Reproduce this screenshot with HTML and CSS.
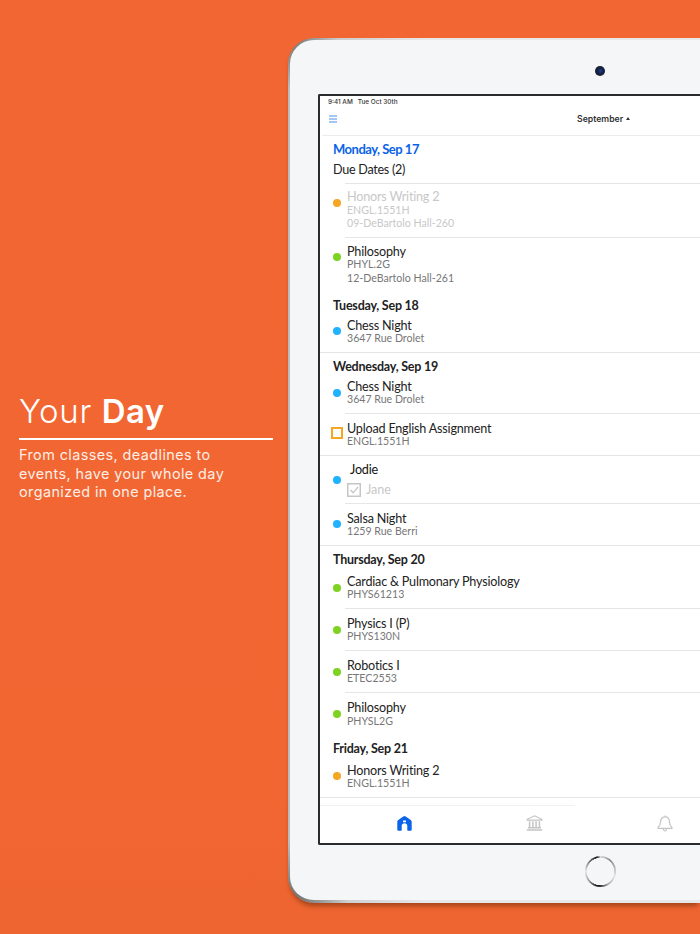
FILE: index.html
```html
<!DOCTYPE html>
<html lang="en">
<head>
<meta charset="utf-8">
<title>Your Day</title>
<link rel="stylesheet" href="styles.css">
</head>
<body>
<main class="stage">
  <section class="pitch">
    <h1 class="pitch-title">Your <b>Day</b></h1>
    <p class="pitch-text">From classes, deadlines to events, have your whole day organized in one place.</p>
  </section>
  <div class="device">
    <div class="camera"></div>
    <div class="screen">
      <div class="status">9:41 AM&nbsp;&nbsp; Tue Oct 30th</div>
      <header class="nav">
        <svg class="menu" width="10" height="8" viewBox="0 0 10 8"><path d="M1 1h8M1 4h8M1 7h8" stroke="#4a90e8" stroke-width="1.2" fill="none"/></svg>
        <span class="month">September<i class="caret"></i></span>
      </header>
      <div class="today">
        <div class="today-date">Monday, Sep 17</div>
        <div class="today-due">Due Dates (2)</div>
      </div>

      <div class="row row-tall muted">
        <span class="dot orange"></span>
        <div class="body divided"><div class="name">Honors Writing 2</div><div class="sub">ENGL.1551H</div><div class="sub">09-DeBartolo Hall-260</div></div>
      </div>
      <div class="row row-tall">
        <span class="dot green"></span>
        <div class="body"><div class="name">Philosophy</div><div class="sub">PHYL.2G</div><div class="sub">12-DeBartolo Hall-261</div></div>
      </div>

      <h2 class="day">Tuesday, Sep 18</h2>
      <div class="row full">
        <span class="dot blue"></span>
        <div class="body"><div class="name">Chess Night</div><div class="sub">3647 Rue Drolet</div></div>
      </div>

      <h2 class="day">Wednesday, Sep 19</h2>
      <div class="row">
        <span class="dot blue"></span>
        <div class="body divided"><div class="name">Chess Night</div><div class="sub">3647 Rue Drolet</div></div>
      </div>
      <div class="row full">
        <span class="square"></span>
        <div class="body"><div class="name">Upload English Assignment</div><div class="sub">ENGL.1551H</div></div>
      </div>
      <div class="row row-check">
        <span class="dot blue"></span>
        <div class="body divided">
          <div class="name name-in">Jodie</div>
          <div class="attendee">
            <svg width="14" height="14" viewBox="0 0 14 14"><rect x=".75" y=".75" width="12.5" height="12.5" fill="none" stroke="#c6c6c6" stroke-width="1.5"/><path d="M3.5 7l2.6 2.8L11 4" fill="none" stroke="#c6c6c6" stroke-width="1.3"/></svg>
            <span>Jane</span>
          </div>
        </div>
      </div>
      <div class="row full">
        <span class="dot blue"></span>
        <div class="body"><div class="name">Salsa Night</div><div class="sub">1259 Rue Berri</div></div>
      </div>

      <h2 class="day day-tall">Thursday, Sep 20</h2>
      <div class="row">
        <span class="dot green"></span>
        <div class="body divided"><div class="name">Cardiac &amp; Pulmonary Physiology</div><div class="sub">PHYS61213</div></div>
      </div>
      <div class="row">
        <span class="dot green"></span>
        <div class="body divided"><div class="name">Physics I (P)</div><div class="sub">PHYS130N</div></div>
      </div>
      <div class="row">
        <span class="dot green"></span>
        <div class="body divided"><div class="name">Robotics I</div><div class="sub">ETEC2553</div></div>
      </div>
      <div class="row">
        <span class="dot green"></span>
        <div class="body"><div class="name">Philosophy</div><div class="sub">PHYSL2G</div></div>
      </div>

      <h2 class="day day-tall">Friday, Sep 21</h2>
      <div class="row full">
        <span class="dot orange"></span>
        <div class="body"><div class="name">Honors Writing 2</div><div class="sub">ENGL.1551H</div></div>
      </div>

      <div class="tab-rule"></div>
      <nav class="tabs">
        <span class="tab">
          <svg width="15" height="15" viewBox="0 0 15 15"><path fill="#0a63e8" fill-rule="evenodd" d="M6.300.5c.7-.4 1.700-.4 2.400 0l4.700 3.200c.8.500 1.300 1.300 1.300 2.300v7.200c0 1-.6 1.600-1.500 1.600h-2c-.5 0-.9-.4-.9-.9V10c0-1.600-1.100-2.700-2.800-2.700S4.700 8.400 4.700 10v3.900c0 .5-.4.900-.9.9h-2C.9 14.800.300 14.200.300 13.200V6c0-1 .5-1.800 1.300-2.300L6.300.5Z M6 4.600h3v1.600H6z"/></svg>
        </span>
        <span class="tab">
          <svg width="17" height="16" viewBox="0 0 17 16" fill="none" stroke="#c4c4c4" stroke-width="1.200"><path d="M8.500 .8 15.800 4.300v.9H1.200v-.9L8.500.8Z"/><path d="M3.600 6.200v6M6.900 6.200v6M10.100 6.200v6M13.400 6.200v6" stroke-width="1.500"/><path d="M2 12.800h13M.8 15h15.400" stroke-width="1.400"/></svg>
        </span>
        <span class="tab">
          <svg width="16" height="17" viewBox="0 0 16 17" fill="none" stroke="#c4c4c4" stroke-width="1.200"><path d="M8 1.800c-2.900 0-4.400 2.200-4.400 5 0 2.900-1 4.200-2.500 5.500v1h13.800v-1c-1.500-1.300-2.500-2.600-2.500-5.500 0-2.800-1.500-5-4.400-5Z"/><path d="M8 .6v1.200M6.300 13.500c.2 1.600.8 2.500 1.700 2.500s1.500-.9 1.700-2.500"/></svg>
        </span>
      </nav>
    </div>
    <div class="home-button"></div>
  </div>
</main>
</body>
</html>
```

FILE: styles.css
```css
* { box-sizing: border-box; }

html, body {
  margin: 0;
  height: 100%;
  overflow: hidden;
}

body {
  background: linear-gradient(#f26633, #f26632 85%, #ee6531);
}

.stage {
  display: flex;
  width: 700px;
  height: 934px;
  overflow: hidden;
}

.pitch {
  flex: 0 0 288px;
  padding: 392px 15px 0 19px;
  font-family: Inter, "Liberation Sans", sans-serif;
  color: #fff;
}

.pitch-title {
  margin: 0;
  padding-bottom: 7px;
  border-bottom: 2px solid #fff;
  font-size: 33px;
  line-height: 39px;
  font-weight: 300;
  letter-spacing: .65px;
}

.pitch-title b { font-weight: 600; letter-spacing: .3px; }

.pitch-text {
  max-width: 215px;
  margin: 6px 0 0;
  font-size: 14.400px;
  line-height: 18.500px;
  letter-spacing: .42px;
  font-weight: 400;
  color: #fdeee6;
}

.device {
  flex: 0 0 412px;
  display: flex;
  flex-direction: column;
  height: 865px;
  margin-top: 38px;
  border: 2px solid transparent;
  border-right: 0;
  border-bottom-width: 3px;
  border-radius: 26px 0 0 26px;
  background:
    linear-gradient(#f4f6f8, #f4f6f8) padding-box,
    radial-gradient(circle 50px at 0 0, #6f6f6f, rgba(120,120,120,0)) border-box,
    radial-gradient(circle 60px at 0 100%, #666, rgba(120,120,120,0)) border-box,
    linear-gradient(90deg, #bcbcbc, #e6e8ea 33%) border-box;
  box-shadow: 0 5px 5px -2px rgba(110,45,10,.6);
}

.camera {
  flex: none;
  width: 10px;
  height: 10px;
  margin: 26px 0 0 305px;
  border-radius: 50%;
  background: radial-gradient(circle at 55% 50%, #1f3f9a 0, #14244f 35%, #1a1d24 70%);
}

.screen {
  flex: none;
  display: flex;
  flex-direction: column;
  width: 382px;
  height: 751px;
  margin: 18px 0 0 28px;
  border: 2px solid #2b2b2d;
  border-right: 0;
  border-radius: 2px 0 0 2px;
  background: #fff;
  font-family: Lato, "Liberation Sans", sans-serif;
  color: #222;
}

.status {
  height: 12px;
  padding: 2px 0 0 8px;
  font: 500 6.400px/8px Inter, "Liberation Sans", sans-serif;
  color: #333;
}

.nav {
  display: flex;
  align-items: center;
  position: relative;
  flex: none;
  height: 28px;
  border-bottom: 1px solid #ececec;
  margin-left: 2px;
  padding: 0 0 5px 255px;
}

.menu { position: absolute; left: 6px; top: 7px; }

.month {
  font: 600 8.700px/11px Inter, "Liberation Sans", sans-serif;
  color: #333;
}

.caret {
  display: inline-block;
  width: 0;
  height: 0;
  margin-left: 3px;
  vertical-align: 2px;
  border-left: 2.500px solid transparent;
  border-right: 2.500px solid transparent;
  border-bottom: 3px solid #333;
}

.today {
  flex: none;
  height: 48px;
  padding: 6px 0 0 13px;
  position: relative;
}

.today-date {
  font-size: 13px;
  line-height: 15px;
  font-weight: 700;
  letter-spacing: -.5px;
  color: #0a63e8;
}

.today-due {
  margin-top: 5px;
  font-size: 12.600px;
  line-height: 16px;
  letter-spacing: -.28px;
  color: #222;
}

.today::after {
  content: "";
  position: absolute;
  left: 25px;
  right: 0;
  bottom: 0;
  border-top: 1px solid #e6e6e6;
}

.day {
  flex: none;
  height: 19px;
  margin: 0;
  padding: 7px 0 0 13px;
  font-size: 12.500px;
  line-height: 14px;
  font-weight: 700;
  letter-spacing: -.23px;
  color: #222;
}

.day-tall { height: 21px; }

.row {
  flex: none;
  display: flex;
  height: 42px;
}

.row-tall { height: 54px; }
.row-check { height: 48px; }
.full { border-bottom: 1px solid #e6e6e6; }

.dot, .square {
  flex: none;
  align-self: center;
  margin-left: 13px;
}

.dot {
  width: 8px;
  height: 8px;
  margin-right: 4px;
  margin-bottom: 1px;
  border-radius: 50%;
}

.row-tall .dot {
  align-self: flex-start;
  margin-top: 15px;
}

.square {
  width: 12px;
  height: 12px;
  margin-left: 11px;
  margin-right: 2px;
  margin-bottom: 3px;
  border: 2px solid #f5a623;
}

.orange { background: #f5a623; }
.green { background: #7ed321; }
.blue { background: #1fb2ff; }

.body {
  flex: 1;
  display: flex;
  flex-direction: column;
  justify-content: center;
  padding: 1px 0 0 2px;
}

.row-tall .body { padding-top: 0; }

.divided { border-bottom: 1px solid #e6e6e6; }

.name {
  font-size: 12.600px;
  line-height: 13.500px;
  letter-spacing: -.2px;
  color: #222;
}

.sub {
  font-size: 10.600px;
  line-height: 13.500px;
  color: #777;
}

.muted .name, .muted .sub { color: #c8c8c8; }

.name-in {
  padding-left: 3px;
  color: #111;
}

.attendee {
  display: flex;
  align-items: center;
  gap: 5px;
  margin-top: 6px;
  font-size: 12.600px;
  line-height: 14px;
  color: #c8c8c8;
}

.tab-rule {
  flex: none;
  width: 255px;
  margin-top: 7px;
  border-top: 1px solid #f1f1f1;
}

.tabs {
  flex: 1;
  display: flex;
  align-items: center;
  padding: 0 0 3px 19px;
}

.tab {
  flex: 0 0 130.500px;
  display: flex;
  justify-content: center;
}

.tab:last-child {
  flex: 0 0 100px;
  padding-left: 30px;
}

.home-button {
  flex: none;
  width: 31px;
  height: 31px;
  margin: 11px 0 0 295px;
  border-radius: 50%;
  background:
    radial-gradient(circle, #f4f6f8 13.500px, rgba(244,246,248,0) 14px),
    conic-gradient(#dcdcdc, #8a8a8a 40deg, #e6e6e6 110deg, #aaa 150deg, #111 190deg, #999 230deg, #e8e8e8 270deg, #666 320deg, #111 345deg, #dcdcdc);
}
```
